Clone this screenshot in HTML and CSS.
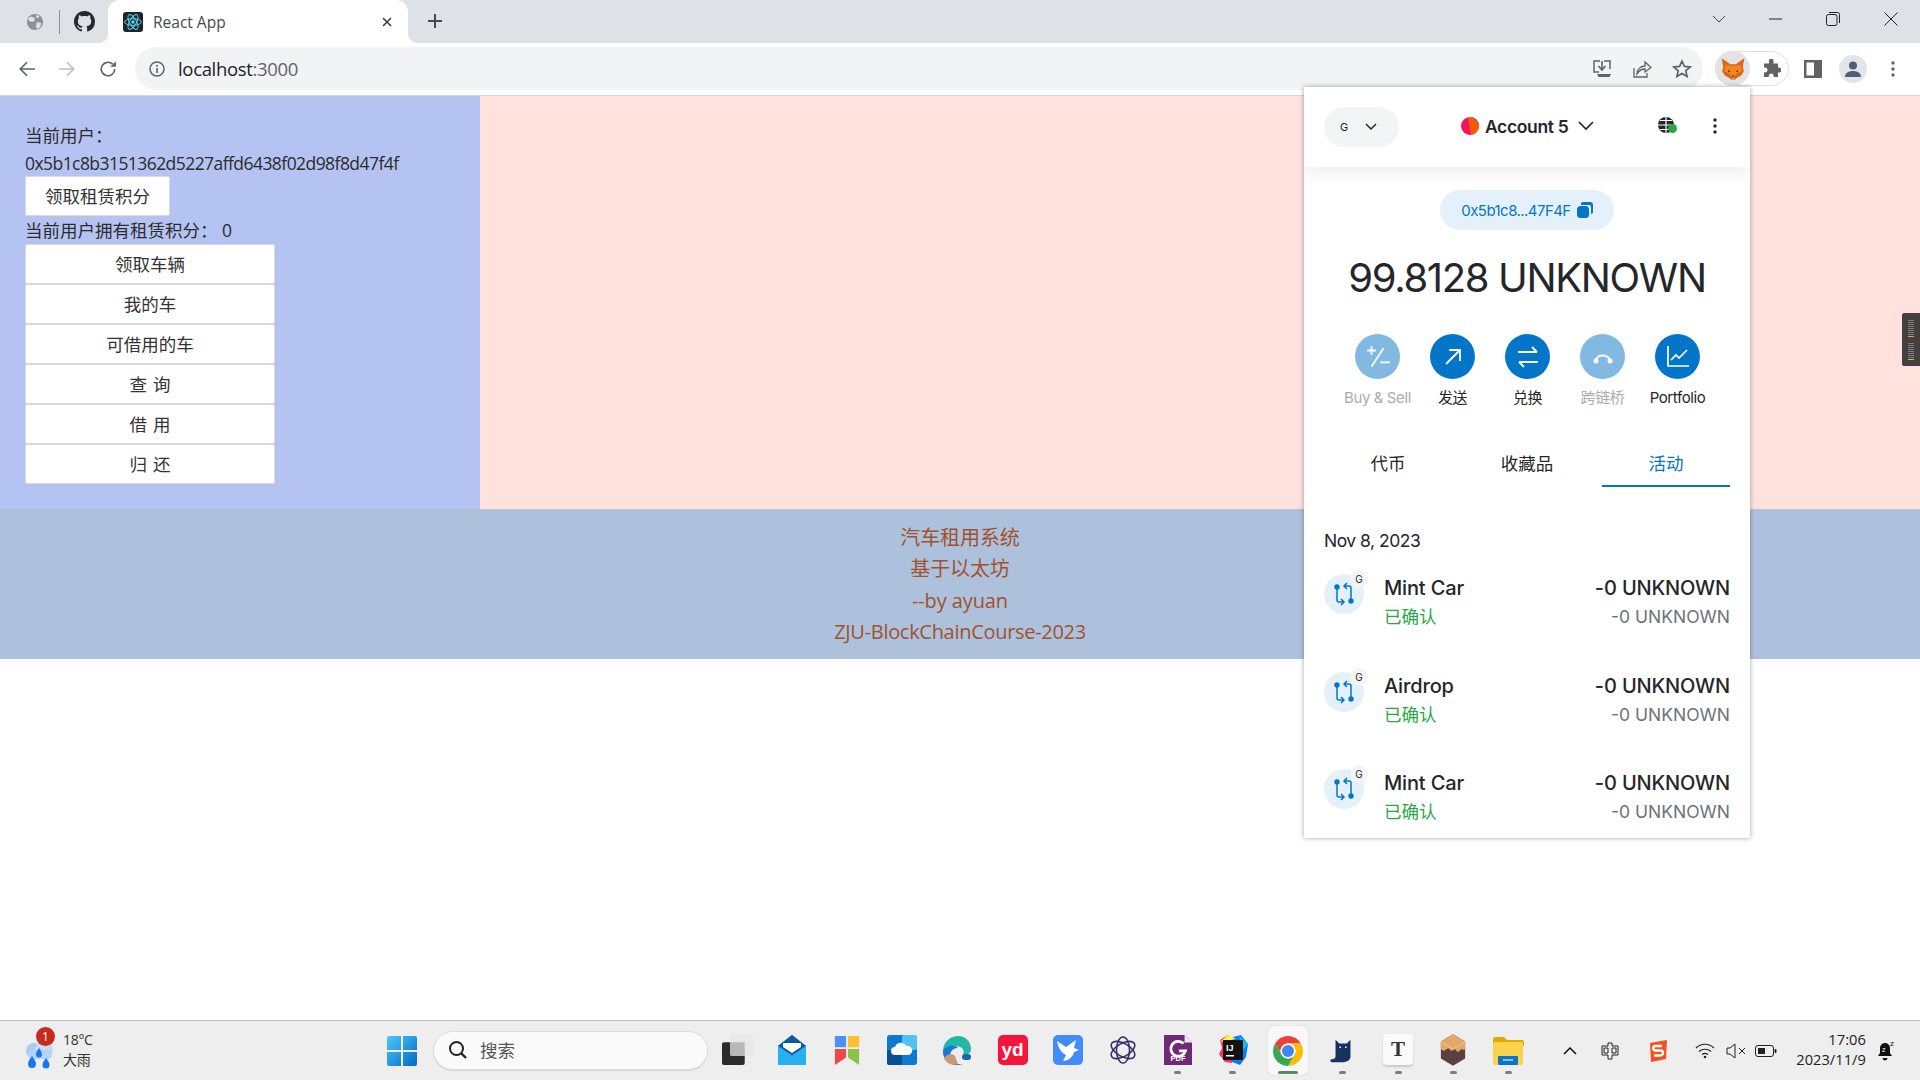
FILE: index.html
```html
<!DOCTYPE html>
<html lang="zh">
<head>
<meta charset="utf-8">
<title>React App</title>
<link rel="stylesheet" href="styles.css">
</head>
<body>
<div class="browser">
  <header class="tabstrip">
    <span class="pin pin-globe"><svg viewBox="0 0 20 20" width="18" height="18"><circle cx="10" cy="10" r="9" fill="#8e9195"/><path d="M5 4l4 1 1 3-3 2-3-1-2-2zM12 10l5 1-1 4-3 3-2-3zM12 2l3 2-2 2-2-2z" fill="#dee1e6"/></svg></span>
    <span class="pin-sep"></span>
    <span class="pin pin-gh"><svg viewBox="0 0 16 16" width="21" height="21"><path fill="#24292f" d="M8 0C3.58 0 0 3.58 0 8c0 3.54 2.29 6.53 5.47 7.59.4.07.55-.17.55-.38 0-.19-.01-.82-.01-1.49-2.01.37-2.53-.49-2.69-.94-.09-.23-.48-.94-.82-1.13-.28-.15-.68-.52-.01-.53.63-.01 1.08.58 1.23.82.72 1.21 1.87.87 2.33.66.07-.52.28-.87.51-1.07-1.78-.2-3.64-.89-3.64-3.95 0-.87.31-1.59.82-2.15-.08-.2-.36-1.02.08-2.12 0 0 .67-.21 2.2.82.64-.18 1.32-.27 2-.27s1.36.09 2 .27c1.53-1.04 2.2-.82 2.2-.82.44 1.1.16 1.92.08 2.12.51.56.82 1.27.82 2.15 0 3.07-1.87 3.75-3.65 3.95.29.25.54.73.54 1.48 0 1.07-.01 1.93-.01 2.2 0 .21.15.46.55.38A8.01 8.01 0 0 0 16 8c0-4.42-3.58-8-8-8z"/></svg></span>
    <div class="tab">
      <span class="tab-fav"><svg viewBox="-12 -12 24 24" width="20" height="20"><g fill="none" stroke="#61dafb" stroke-width="1.1"><ellipse rx="10" ry="4"/><ellipse rx="10" ry="4" transform="rotate(60)"/><ellipse rx="10" ry="4" transform="rotate(120)"/></g><circle r="2" fill="#61dafb"/></svg></span>
      <span class="tab-title">React App</span>
      <svg class="tab-x" viewBox="0 0 12 12" width="12" height="12"><path d="M2 2l8 8M10 2l-8 8" stroke="#3c4043" stroke-width="1.6"/></svg>
    </div>
    <svg class="newtab" viewBox="0 0 16 16" width="16" height="16"><path d="M8 1v14M1 8h14" stroke="#45494e" stroke-width="2"/></svg>
    <div class="winctl">
      <svg viewBox="0 0 14 8" width="14" height="8" class="wc-chev"><path d="M1 1l6 6 6-6" fill="none" stroke="#44474c" stroke-width="1"/></svg>
      <svg viewBox="0 0 14 2" width="14" height="2" class="wc-min"><path d="M0 1h13" stroke="#222" stroke-width="1"/></svg>
      <svg viewBox="0 0 14 14" width="14" height="14" class="wc-max"><rect x=".5" y="2.5" width="10.5" height="11" rx="2" fill="none" stroke="#222"/><path d="M3 .5h8.5a2 2 0 0 1 2 2V11" fill="none" stroke="#222"/></svg>
      <svg viewBox="0 0 14 14" width="14" height="14" class="wc-x"><path d="M.5.5l13 13M13.5.5l-13 13" stroke="#222" stroke-width="1"/></svg>
    </div>
  </header>

  <nav class="toolbar">
    <svg class="nav nav-back" viewBox="0 0 16 16" width="18" height="18"><path d="M15 8H2M8 2L2 8l6 6" fill="none" stroke="#5f6368" stroke-width="1.5"/></svg>
    <svg class="nav nav-fwd" viewBox="0 0 16 16" width="18" height="18"><path d="M1 8h13M8 2l6 6-6 6" fill="none" stroke="#bdc1c6" stroke-width="1.5"/></svg>
    <svg class="nav nav-re" viewBox="0 0 16 16" width="18" height="18"><path d="M14 8a6 6 0 1 1-1.8-4.3" fill="none" stroke="#5f6368" stroke-width="1.5"/><path d="M15 1v5h-5z" fill="#5f6368"/></svg>
    <div class="omnibox">
      <svg class="omni-info" viewBox="0 0 16 16" width="16" height="16"><circle cx="8" cy="8" r="7" fill="none" stroke="#5f6368" stroke-width="1.5"/><path d="M8 7v5" stroke="#5f6368" stroke-width="1.6"/><circle cx="8" cy="4.7" r="1" fill="#5f6368"/></svg>
      <span class="url">localhost<span class="url-dim">:3000</span></span>
      <span class="omni-right">
        <svg viewBox="0 0 20 20" width="20" height="20"><path d="M8 2H2v11h5M12 2h6v8" fill="none" stroke="#5f6368" stroke-width="1.5"/><path d="M10 2v8M6.5 7l3.5 4 3.5-4" fill="none" stroke="#5f6368" stroke-width="1.6"/><path d="M5 15h14l-1.5 3H6.5z" fill="#5f6368"/></svg>
        <svg viewBox="0 0 20 20" width="20" height="20"><path d="M2 9v9h13v-4" fill="none" stroke="#5f6368" stroke-width="1.3"/><path d="M5 15c0-5 4-8 8-8V3l6 5.5L13 13V10c-3 0-6 1.5-8 5z" fill="none" stroke="#5f6368" stroke-width="1.3"/></svg>
        <svg viewBox="0 0 20 20" width="20" height="20"><path d="M10 2l2.400 5.400 5.800.6-4.400 3.900 1.300 5.700-5.100-3-5.100 3 1.300-5.700L1.800 8l5.800-.6z" fill="none" stroke="#5f6368" stroke-width="1.7"/></svg>
      </span>
    </div>
    <div class="ext-pill">
      <span class="ext-fox"><svg viewBox="0 0 24 24" width="26" height="26"><path d="M1.500 2L9.500 7.500h5L22.500 2 21 10l1 4-2.500 4-4.500 2.500-1 1.500h-4L9 20.500 4.500 18 2 14l1-4z" fill="#d9661a"/><path d="M5 8l5 1h4l5-1 1 6-4 2-4 4-4-4-4-2z" fill="#f6851b"/><path d="M10 20.500h4l-.8 1.500h-2.400z" fill="#c0ad9e"/><path d="M7.500 13l2 1-2 1zM16.500 13l-2 1 2 1zM11 18h2l-1 1.500z" fill="#233447"/></svg></span>
      <svg class="ext-puzzle" viewBox="0 0 20 20" width="20" height="20"><path d="M8 1.500a2.300 2.300 0 0 1 4.500 0V4.500h4.500v4.300a2.500 2.500 0 1 1 0 4.600V18H12.500a2.500 2.500 0 1 0-4.600 0H3v-4.800a2.500 2.500 0 1 0 0-4.600V4.500h5z" fill="#5f6368"/></svg>
    </div>
    <svg class="tb-side" viewBox="0 0 18 18" width="18" height="18"><path d="M0 0h18v18H0zM2.500 2.500v13H10v-13z" fill="#5f6368" fill-rule="evenodd"/></svg>
    <span class="tb-prof"><svg viewBox="0 0 20 20" width="20" height="20"><circle cx="10" cy="6.500" r="4" fill="#515f76"/><path d="M2 18c0-4 3.500-6 8-6s8 2 8 6z" fill="#515f76"/></svg></span>
    <svg class="tb-dots" viewBox="0 0 4 16" width="4" height="16"><circle cx="2" cy="2" r="1.7" fill="#5f6368"/><circle cx="2" cy="8" r="1.7" fill="#5f6368"/><circle cx="2" cy="14" r="1.7" fill="#5f6368"/></svg>
  </nav>

  <main class="page">
    <section class="content">
      <aside class="sidebar">
        <div class="line user">当前用户：</div>
        <div class="line addr">0x5b1c8b3151362d5227affd6438f02d98f8d47f4f</div>
        <button class="btn btn-claim">领取租赁积分</button>
        <div class="line credit">当前用户拥有租赁积分：&nbsp;0</div>
        <div class="menu">
          <button class="btn">领取车辆</button>
          <button class="btn">我的车</button>
          <button class="btn">可借用的车</button>
          <button class="btn">查 询</button>
          <button class="btn">借 用</button>
          <button class="btn">归 还</button>
        </div>
      </aside>
      <div class="stage"></div>
    </section>
    <footer class="foot">
      <div>汽车租用系统</div>
      <div>基于以太坊</div>
      <div>--by ayuan</div>
      <div class="foot-course">ZJU-BlockChainCourse-2023</div>
    </footer>
    <div class="blank"></div>
  </main>

  <div class="side-widget">
    <span class="ticks"><i></i><i></i><i></i><i></i><i></i><i></i><i></i><i></i><b class="or"></b></span>
    <span class="ticks"><i></i><i></i><i></i><i></i><i></i><i></i><i></i><i></i><b class="gr"></b></span>
  </div>

  <div class="mm">
    <div class="mm-head">
      <div class="net"><span class="net-g">G</span><svg viewBox="0 0 12 8" width="12" height="8"><path d="M1 1l5 5 5-5" fill="none" stroke="#24272a" stroke-width="1.5"/></svg></div>
      <div class="acct">
        <svg viewBox="0 0 18 18" width="18" height="18"><defs><clipPath id="jz"><circle cx="9" cy="9" r="9"/></clipPath></defs><g clip-path="url(#jz)"><rect width="18" height="18" fill="#f5135b"/><path d="M7 0h11v18H10z" fill="#fb5a00"/><path d="M11 0h7v6z" fill="#1d5fdb"/></g></svg>
        <span class="acct-name">Account 5</span>
        <svg viewBox="0 0 16 10" width="16" height="10"><path d="M1 1l7 7 7-7" fill="none" stroke="#24272a" stroke-width="1.7"/></svg>
      </div>
      <svg class="globe" viewBox="0 0 22 20" width="22" height="20"><circle cx="9" cy="9" r="8" fill="#24272a"/><path d="M9 1v16M1 9h16M3 4.500h12M3 13.500h12" stroke="#fff" stroke-width="1.2"/><circle cx="15.500" cy="12.500" r="4.500" fill="#28a745"/></svg>
      <svg class="kebab" viewBox="0 0 4 16" width="4" height="16"><circle cx="2" cy="2" r="1.7" fill="#24272a"/><circle cx="2" cy="8" r="1.7" fill="#24272a"/><circle cx="2" cy="14" r="1.7" fill="#24272a"/></svg>
    </div>
    <div class="mm-addr"><span>0x5b1c8...47F4F</span><svg viewBox="0 0 16 16" width="16" height="16"><path d="M6 0h7a3 3 0 0 1 3 3v7a2 2 0 0 1-2 2V5a2 2 0 0 0-2-2H4a2.500 2.500 0 0 1 2-3z" fill="#0376c9"/><rect x="0" y="4" width="12" height="12" rx="3.500" fill="#0376c9"/></svg></div>
    <div class="mm-bal">99.8128 UNKNOWN</div>
    <div class="mm-actions">
      <div class="act off"><span class="act-c"><svg viewBox="0 0 24 24" width="26" height="26"><path d="M2 6h8M6 2v8M17 4L6 21M14 17h9" fill="none" stroke="#fff" stroke-width="1.7"/></svg></span><span class="act-l">Buy &amp; Sell</span></div>
      <div class="act"><span class="act-c"><svg viewBox="0 0 24 24" width="24" height="24"><path d="M5 19L18 6M8 5h11v11" fill="none" stroke="#fff" stroke-width="1.8"/></svg></span><span class="act-l">发送</span></div>
      <div class="act"><span class="act-c"><svg viewBox="0 0 24 24" width="24" height="24"><path d="M2 7h19M16 2l5 5M22 17H3M8 22l-5-5" fill="none" stroke="#fff" stroke-width="1.8"/></svg></span><span class="act-l">兑换</span></div>
      <div class="act off"><span class="act-c"><svg viewBox="0 0 24 24" width="24" height="24"><path d="M5 15c2-6 11-6 14 0" fill="none" stroke="#fff" stroke-width="2"/><circle cx="5" cy="16" r="2.500" fill="#fff"/><circle cx="19" cy="16" r="2.500" fill="#fff"/></svg></span><span class="act-l">跨链桥</span></div>
      <div class="act"><span class="act-c"><svg viewBox="0 0 24 24" width="24" height="24"><path d="M2 1v20h21" fill="none" stroke="#fff" stroke-width="1.7"/><path d="M5 15l5-5 3 3 8-8" fill="none" stroke="#fff" stroke-width="1.7"/></svg></span><span class="act-l">Portfolio</span></div>
    </div>
    <div class="mm-tabs">
      <span class="mm-tab">代币</span>
      <span class="mm-tab">收藏品</span>
      <span class="mm-tab on">活动</span>
    </div>
    <div class="mm-date">Nov 8, 2023</div>
    <div class="tx">
      <span class="tx-ic"><svg viewBox="0 0 24 24" width="24" height="24"><g fill="none" stroke="#0376c9" stroke-width="1.500"><path d="M5 6v12a2 2 0 0 0 2 2h4M9 17l3 3-3 3M19 18V6a2 2 0 0 0-2-2h-4M15 7l-3-3 3-3"/></g><circle cx="5" cy="5" r="2.700" fill="#0376c9"/><circle cx="19" cy="19" r="2.700" fill="#0376c9"/></svg><span class="tx-badge">G</span></span>
      <div class="tx-l"><div class="tx-t">Mint Car</div><div class="tx-s">已确认</div></div>
      <div class="tx-r"><div class="tx-t">-0 UNKNOWN</div><div class="tx-v">-0 UNKNOWN</div></div>
    </div>
    <div class="tx">
      <span class="tx-ic"><svg viewBox="0 0 24 24" width="24" height="24"><g fill="none" stroke="#0376c9" stroke-width="1.500"><path d="M5 6v12a2 2 0 0 0 2 2h4M9 17l3 3-3 3M19 18V6a2 2 0 0 0-2-2h-4M15 7l-3-3 3-3"/></g><circle cx="5" cy="5" r="2.700" fill="#0376c9"/><circle cx="19" cy="19" r="2.700" fill="#0376c9"/></svg><span class="tx-badge">G</span></span>
      <div class="tx-l"><div class="tx-t">Airdrop</div><div class="tx-s">已确认</div></div>
      <div class="tx-r"><div class="tx-t">-0 UNKNOWN</div><div class="tx-v">-0 UNKNOWN</div></div>
    </div>
    <div class="tx">
      <span class="tx-ic"><svg viewBox="0 0 24 24" width="24" height="24"><g fill="none" stroke="#0376c9" stroke-width="1.500"><path d="M5 6v12a2 2 0 0 0 2 2h4M9 17l3 3-3 3M19 18V6a2 2 0 0 0-2-2h-4M15 7l-3-3 3-3"/></g><circle cx="5" cy="5" r="2.700" fill="#0376c9"/><circle cx="19" cy="19" r="2.700" fill="#0376c9"/></svg><span class="tx-badge">G</span></span>
      <div class="tx-l"><div class="tx-t">Mint Car</div><div class="tx-s">已确认</div></div>
      <div class="tx-r"><div class="tx-t">-0 UNKNOWN</div><div class="tx-v">-0 UNKNOWN</div></div>
    </div>
  </div>

  <div class="taskbar">
    <div class="weather">
      <span class="wx-ic"><svg viewBox="0 0 34 34" width="34" height="34"><circle cx="12" cy="13" r="8" fill="#a8ccf5"/><circle cx="22" cy="12" r="9" fill="#c4dcf8"/><rect x="6" y="12" width="24" height="9" rx="4.500" fill="#b5d3f7"/><path d="M10 18c3 4 4 6 4 8a4 4 0 0 1-8 0c0-2 1-4 4-8zM24 20c2.500 3.500 3.500 5 3.500 7a3.500 3.500 0 0 1-7 0c0-2 1-3.500 3.500-7zM17 10c2.500 3.500 3 5 3 6.500a3 3 0 0 1-6 0c0-1.500.5-3 3-6.500z" fill="#1677f2"/></svg><span class="wx-badge">1</span></span>
      <span class="wx-t"><span>18°C</span><span>大雨</span></span>
    </div>
    <svg class="winlogo" viewBox="0 0 30 30" width="30" height="30"><defs><linearGradient id="wl" x1="0" y1="0" x2="1" y2="1"><stop offset="0" stop-color="#4cc9f7"/><stop offset="1" stop-color="#0069c8"/></linearGradient></defs><path d="M0 2a2 2 0 0 1 2-2h12v14H0zM16 0h12a2 2 0 0 1 2 2v12H16zM0 16h14v14H2a2 2 0 0 1-2-2zM16 16h14v12a2 2 0 0 1-2 2H16z" fill="url(#wl)"/></svg>
    <div class="search"><svg viewBox="0 0 20 20" width="20" height="20"><circle cx="8.500" cy="8.500" r="6.500" fill="none" stroke="#222" stroke-width="2"/><path d="M13 13l5 5" stroke="#222" stroke-width="2.400"/></svg><span>搜索</span></div>
    <div class="apps">
      <span class="app"><svg viewBox="0 0 30 30" width="31" height="31"><rect x="0" y="8" width="22" height="22" rx="2" fill="#2b2b2b"/><rect x="8" y="0" width="22" height="21" rx="2" fill="#e8e8e8"/><rect x="8" y="8" width="14" height="13" fill="#b8b8b8"/></svg></span>
      <span class="app"><svg viewBox="0 0 32 32" width="32" height="32"><path d="M2 12L16 1l14 11v19H2z" fill="#1d8fe0"/><path d="M2 12L16 1l14 11-14 9z" fill="#0a5aa6"/><path d="M7 9h18v4l-9 6-9-6z" fill="#fff"/><path d="M2 12l14 10 14-10v19H2z" fill="#29b0f0"/></svg></span>
      <span class="app"><svg viewBox="0 0 30 32" width="28" height="32"><rect x="2" y="1" width="12" height="12" fill="#4d90f5"/><rect x="16" y="1" width="12" height="12" fill="#fbc02d"/><path d="M2 15h12v9L2 32z" fill="#e94b43"/><path d="M16 15h12v17l-12-8z" fill="#8bc24a"/></svg></span>
      <span class="app"><svg viewBox="0 0 30 30" width="30" height="30"><rect width="30" height="30" rx="3" fill="#0f78d0"/><rect x="15" width="15" height="15" rx="2" fill="#4fc3f7"/><rect y="15" width="15" height="15" rx="2" fill="#0a4e93"/><path d="M8 20a4 4 0 0 1 0-8 6 6 0 0 1 11-1 4.500 4.500 0 0 1 3 9z" fill="#fff"/></svg></span>
      <span class="app"><svg viewBox="0 0 30 30" width="30" height="30"><path d="M1 15C2 6 9 1 16 1c8 0 13 6 13 13 0 5-5 6-8 5 1-1 1-4-1-6-4-3-11-3-19 2z" fill="#22b8a4"/><path d="M1 15c4-5 12-6 15-2-7 0-9 6-7 11 2 4 6 6 12 5-2 1-4 1-7 1C8 30 0 24 1 15z" fill="#1b78d4"/><path d="M2 23c2-4 9-5 11-2l3 8c-7 2-12-1-14-6z" fill="#c89a78"/><rect x="20" y="19" width="9" height="6" rx="3" fill="#1566b3"/></svg></span>
      <span class="app"><span class="yd">yd</span></span>
      <span class="app"><svg viewBox="0 0 30 30" width="30" height="30"><rect width="30" height="30" rx="5" fill="#418bfb"/><path d="M4 6l9 6 10-7-2 8 5 2-5 2c-1 5-6 9-11 9l3-6c-5-2-8-8-9-14z" fill="#fff"/></svg></span>
      <span class="app"><svg viewBox="0 0 30 30" width="28" height="28"><g fill="none" stroke="#34306a" stroke-width="1.700"><ellipse cx="15" cy="15" rx="7" ry="14"/><ellipse cx="15" cy="15" rx="7" ry="14" transform="rotate(60 15 15)"/><ellipse cx="15" cy="15" rx="7" ry="14" transform="rotate(120 15 15)"/></g></svg></span>
      <span class="app run"><svg viewBox="0 0 30 32" width="28" height="32"><path d="M0 0h22l8 8v24H0z" fill="#6e2a77"/><path d="M22 0l8 8h-8z" fill="#efe6f0"/><text x="15" y="28" font-size="8" font-weight="700" fill="#fff" text-anchor="middle" font-family="Liberation Sans, sans-serif">PDF</text><path d="M21 9a8 8 0 1 0 2 8h-7" fill="none" stroke="#fff" stroke-width="3"/></svg></span>
      <span class="app run"><svg viewBox="0 0 32 32" width="32" height="32"><path d="M3 6l8-5 6 4-2 24-7-1-6-8 3-6z" fill="#fe315d"/><path d="M16 3l8-2 7 9-2 13-6 8-8-3z" fill="#087cfa"/><path d="M22 2l9 8-5 6z" fill="#07c3f2"/><path d="M3 8l8-7 8 4z" fill="#fcf84a"/><rect x="6" y="6" width="20" height="20" fill="#111"/><text x="9" y="17" font-size="9" font-weight="700" fill="#fff" font-family="Liberation Sans, sans-serif">IJ</text><rect x="9" y="21" width="8" height="1.500" fill="#fff"/></svg></span>
      <span class="app active run-g"><svg viewBox="0 0 48 48" width="36" height="36"><path d="M6.680 14A20 20 0 0 1 41.320 14H24A10 10 0 0 0 15.340 29Z" fill="#ea4335"/><path d="M41.320 14A20 20 0 0 1 24 44L32.660 29A10 10 0 0 0 24 14Z" fill="#fbbc05"/><path d="M24 44A20 20 0 0 1 6.680 14L15.340 29A10 10 0 0 0 32.660 29Z" fill="#34a853"/><circle cx="24" cy="24" r="10" fill="#fff"/><circle cx="24" cy="24" r="8" fill="#4285f4"/></svg></span>
      <span class="app run"><svg viewBox="0 0 30 30" width="28" height="28"><path d="M7 4l4 4h8l4-4v18c0 4-4 6-8 6H3c-2 0-2-3 0-3 2 0 4-1 4-3z" fill="#16315f"/><circle cx="12" cy="12" r="1" fill="#d5e4ff"/><circle cx="18" cy="12" r="1" fill="#d5e4ff"/></svg></span>
      <span class="app run"><span class="typora">T</span></span>
      <span class="app run"><svg viewBox="0 0 30 34" width="28" height="32"><path d="M15 0l13 8v18l-13 8-13-8V8z" fill="#5a4040"/><path d="M15 0l13 8v8c-2 2-3-1-5 1s-3 3-5 0-4 3-6 0-4-1-5 0-3 1-5-1V8z" fill="#e2a868"/><path d="M2 8l13 8 13-8" fill="none" stroke="#f2ca98" stroke-width="1"/></svg></span>
      <span class="app run"><svg viewBox="0 0 32 30" width="32" height="30"><path d="M1 4a2 2 0 0 1 2-2h9l3 3h15a2 2 0 0 1 2 2v4H1z" fill="#e2a900"/><rect x="1" y="7" width="30" height="23" rx="2" fill="#fbd34b"/><rect x="6" y="21" width="20" height="9" rx="1" fill="#0b74c9"/><rect x="11" y="24" width="10" height="2" fill="#7cc3f2"/></svg></span>
    </div>
    <svg class="tray t-up" viewBox="0 0 14 8" width="14" height="8"><path d="M1 7l6-6 6 6" fill="none" stroke="#111" stroke-width="1.5"/></svg>
    <svg class="tray t-zh" viewBox="0 0 18 18" width="18" height="18"><path d="M7 1h4v3h6v9h-6v4H7v-4H1V4h6zM7 6H3v5h4zM11 6v5h4V6z" fill="none" stroke="#222" stroke-width="1"/></svg>
    <svg class="tray t-s" viewBox="0 0 20 22" width="20" height="22"><path d="M2 3L19 0l-1 19L3 22z" fill="#f4511e"/><path d="M14 6H7.500a2 2 0 0 0 0 4.500h5a2 2 0 0 1 0 5H6" fill="none" stroke="#fff" stroke-width="2.400"/></svg>
    <svg class="tray t-wifi" viewBox="0 0 20 16" width="20" height="16"><path d="M1 5c5-5 13-5 18 0M4 8.500c3.500-3 8.500-3 12 0M7 11.500c2-1.500 4-1.500 6 0" fill="none" stroke="#222" stroke-width="1.2"/><circle cx="10" cy="14" r="1.300" fill="#222"/></svg>
    <svg class="tray t-snd" viewBox="0 0 20 16" width="20" height="16"><path d="M1 5h3l5-4v14l-5-4H1z" fill="none" stroke="#222" stroke-width="1"/><path d="M13 5l6 6M19 5l-6 6" stroke="#222" stroke-width="1"/></svg>
    <svg class="tray t-bat" viewBox="0 0 22 12" width="22" height="12"><rect x=".5" y=".5" width="18" height="11" rx="2.500" fill="none" stroke="#222"/><rect x="3" y="3" width="7" height="6" fill="#222"/><rect x="19.500" y="4" width="2" height="4" rx="1" fill="#222"/></svg>
    <div class="clock"><span>17:06</span><span>2023/11/9</span></div>
    <svg class="tray t-bell" viewBox="0 0 20 22" width="20" height="22"><path d="M9 3a5 5 0 0 1 5 5v5l2 3H2l2-3V8a5 5 0 0 1 5-5zM6.500 18h5a2.500 2.500 0 0 1-5 0z" fill="#111"/><text x="6" y="12" font-size="7" fill="#fff" font-family="Liberation Sans, sans-serif">z</text><text x="14" y="6" font-size="8" fill="#111" font-family="Liberation Sans, sans-serif">z</text></svg>
  </div>
</div>
</body>
</html>
```
FILE: styles.css
```css
* { box-sizing: border-box; }
html, body { margin: 0; height: 100%; }
body {
  font-family: "Open Sans", "Noto Sans CJK SC", sans-serif;
  background: #fff;
  overflow: hidden;
}
.browser { width: 1920px; height: 1080px; display: flex; flex-direction: column; position: relative; overflow: hidden; }

/* tab strip */
.tabstrip { height: 43px; flex: none; background: #dee1e6; display: flex; align-items: center; }
.pin { width: 24px; display: flex; justify-content: center; }
.pin-globe { margin-left: 23px; }
.pin-sep { width: 1px; height: 24px; background: #8e9195; margin: 0 12px; }
.tab {
  width: 300px; height: 43px; background: #fff; border-radius: 12px 12px 0 0;
  display: flex; align-items: center; padding-left: 15px; padding-right: 15px;
  position: relative; margin-left: 12px;
}
.tab::before, .tab::after { content: ""; position: absolute; bottom: 0; width: 10px; height: 10px; }
.tab::before { left: -10px; background: radial-gradient(circle at 0 0, transparent 10px, #fff 10.5px); }
.tab::after { right: -10px; background: radial-gradient(circle at 100% 0, transparent 10px, #fff 10.5px); }
.tab-fav { width: 20px; height: 20px; background: #20232a; border-radius: 3px; display: flex; }
.tab-title { margin-left: 10px; font-size: 15.5px; color: #45494e; flex: 1; }
.newtab { margin-left: 19px; margin-bottom: 2px; }
.winctl { margin-left: auto; display: flex; align-items: center; height: 100%; padding-bottom: 6px; }
.wc-min { margin-left: 43px; }
.wc-max { margin-left: 43px; }
.wc-x { margin-left: 44px; margin-right: 22px; }

/* toolbar */
.toolbar { height: 53px; flex: none; background: #fff; border-bottom: 1px solid #d6d6d6; display: flex; align-items: center; padding-bottom: 1px; }
.nav-back { margin-left: 18px; }
.nav-fwd { margin-left: 22px; }
.nav-re { margin-left: 23px; }
.omnibox { width: 1568px; height: 43px; margin-left: 18px; border-radius: 22px; background: #f1f3f4; display: flex; align-items: center; padding: 0 11px 0 14px; }
.url { margin-left: 13px; font-size: 18.5px; letter-spacing: -.33px; color: #202124; }
.url-dim { color: #5f6368; }
.omni-right { margin-left: auto; display: flex; gap: 20px; }
.ext-pill { width: 74px; height: 35px; margin-left: 12px; border-radius: 18px; border: 1px solid #e0e0e0; display: flex; align-items: center; }
.ext-fox { width: 35px; height: 35px; margin: -1px 0 -1px -1px; border-radius: 50%; background: #e3e3e3; display: flex; align-items: center; justify-content: center; }
.ext-puzzle { margin-left: 11px; }
.tb-side { margin-left: 15px; }
.tb-prof { width: 28px; height: 28px; border-radius: 50%; background: #e2e5ea; margin-left: 17px; display: flex; align-items: center; justify-content: center; }
.tb-dots { margin-left: 24px; }

/* page */
.page { flex: 1; display: flex; flex-direction: column; min-height: 0; }
.content { height: 413px; flex: none; display: flex; }
.sidebar { width: 480px; background: #b5c3f3; padding: 26px 25px 0; color: #2c2c2c; font-size: 17.5px; }
.stage { flex: 1; background: #ffe1de; }
.line { line-height: 27px; height: 27px; }
.user { height: 28px; }
.addr { letter-spacing: -.56px; height: 26px; }
.btn {
  display: block; background: #fff; border: 1px solid #d9d9d9; border-radius: 2px;
  font: inherit; color: #333; height: 40px; width: 250px; padding: 0; line-height: 36px; word-spacing: 1.5px;
}
.btn-claim { width: 145px; }
.credit { margin-top: 1px; height: 27px; }
.menu { display: flex; flex-direction: column; }
.foot { height: 150px; flex: none; background: #aec1dc; color: #a0522d; text-align: center; font-size: 20px; line-height: 31.4px; padding-top: 13px; letter-spacing: -.1px; }
.foot-course { letter-spacing: -.3px; }
.blank { flex: 1; }

.side-widget { position: absolute; left: 1902px; top: 313px; width: 18px; height: 53px; background: #463f3f; border-radius: 2px 0 0 2px; padding: 7px 0 0 6px; display: flex; flex-direction: column; gap: 6px; }
.ticks { display: flex; flex-direction: column; gap: 1px; }
.ticks i { display: block; width: 6px; height: 1px; background: #7d7d7d; }
.ticks b { display: block; width: 6px; height: 1px; }
.ticks .or { background: #ff9a1f; }
.ticks .gr { background: #8be04a; }

/* metamask popup */
.mm { position: absolute; left: 1304px; top: 87px; width: 446px; height: 751px; background: #fff; box-shadow: 0 0 5px rgba(0,0,0,.35); overflow: hidden; font-family: Inter, "Noto Sans CJK SC", sans-serif; color: #24272a; }
.mm-head { height: 80px; display: flex; align-items: center; padding: 0 0 2px 20px; box-shadow: 0 6px 14px rgba(0,0,0,.07); position: relative; }
.net { width: 75px; height: 40px; margin-top: 2px; border-radius: 20px; background: #f2f4f6; display: flex; align-items: center; padding-left: 16px; gap: 17px; }
.net-g { font-size: 11px; color: #24272a; }
.acct { display: flex; align-items: center; margin-left: 62px; width: 166px; }
.acct-name { font-size: 17.5px; font-weight: 600; margin: 0 10px 0 6px; letter-spacing: -.35px; }
.globe { margin-left: 30px; }
.kebab { margin-left: 34px; }
.mm-addr { width: 174px; height: 40px; margin: 23px auto 0; border-radius: 20px; background: #e5f1fa; color: #0376c9; font-size: 15px; display: flex; align-items: center; justify-content: center; gap: 6px; letter-spacing: -.55px; }
.mm-bal { text-align: center; font-size: 40px; line-height: 56px; margin-top: 20px; letter-spacing: -1.35px; font-weight: 400; }
.mm-actions { display: flex; padding-left: 36px; margin-top: 28px; }
.act { width: 75px; display: flex; flex-direction: column; align-items: center; }
.act-c { width: 45px; height: 45px; border-radius: 50%; background: #0376c9; display: flex; align-items: center; justify-content: center; }
.act.off .act-c { background: #81b9e3; }
.act-l { font-size: 15px; line-height: 20px; margin-top: 9px; margin-bottom: -1px; white-space: nowrap; letter-spacing: -.4px; }
.act.off .act-l { color: #a8adb2; }
.mm-tabs { display: flex; gap: 11px; padding: 0 20px; margin-top: 33px; }
.mm-tab { width: 128px; height: 47px; text-align: center; font-size: 17.5px; line-height: 48px; }
.mm-tab.on { color: #0376c9; border-bottom: 2px solid #0376c9; }
.mm-date { font-size: 17.5px; line-height: 28px; padding-left: 20px; margin-top: 40px; margin-bottom: -1px; letter-spacing: -.5px; }
.tx { height: 97.5px; display: flex; padding: 20px 20px 0; }
.tx-ic { width: 40px; height: 40px; border-radius: 50%; background: #e5f1fa; display: flex; align-items: center; justify-content: center; position: relative; flex: none; }
.tx-badge { position: absolute; right: -4px; top: -4px; width: 18px; height: 18px; border-radius: 50%; background: #f2f4f6; font-size: 10px; display: flex; align-items: center; justify-content: center; }
.tx-l { margin-left: 20px; padding-top: 1px; }
.tx-r { margin-left: auto; text-align: right; padding-top: 1px; }
.tx-t { font-size: 20px; line-height: 26px; font-weight: 500; height: 28px; letter-spacing: -.15px; white-space: nowrap; }
.tx-s { font-size: 17.5px; line-height: 28px; color: #28a745; }
.tx-v { font-size: 17.5px; line-height: 28px; color: #6a737d; letter-spacing: 0; }

/* taskbar */
.taskbar { position: absolute; left: 0; right: 0; bottom: 0; height: 60px; background: #eee; border-top: 1px solid #bdbdbd; display: flex; align-items: center; }
.weather { width: 387px; display: flex; align-items: center; padding-left: 22px; flex: none; }
.wx-ic { position: relative; width: 34px; height: 34px; margin-top: 8px; }
.wx-badge { position: absolute; left: 14px; top: -11px; width: 19px; height: 19px; border-radius: 50%; background: #c42b1c; color: #fff; font-size: 12px; text-align: center; line-height: 19px; }
.wx-t { margin-left: 7px; display: flex; flex-direction: column; font-size: 14px; line-height: 20px; color: #333; letter-spacing: -.3px; margin-top: -2px; }
.winlogo { flex: none; }
.search { width: 275px; height: 39px; border-radius: 20px; margin-left: 16px; background: #fafafa; border: 1px solid #dcdcdc; box-shadow: 0 1px 1px rgba(0,0,0,.1); display: flex; align-items: center; padding: 0 0 2px 14px; gap: 12px; font-size: 17.5px; color: #555; flex: none; }
.apps { display: flex; margin-left: 1.5px; flex: none; }
.app { width: 55.1px; height: 59px; display: flex; align-items: center; justify-content: center; position: relative; padding-bottom: 2px; }
.app.run::after { content: ""; position: absolute; bottom: 6px; left: 24px; width: 7px; height: 3px; border-radius: 2px; background: #7e7e7e; }
.app.active { background: #f8f8f8; border-radius: 5px; box-shadow: 0 0 1px rgba(0,0,0,.3); height: 49px; margin-top: 5px; width: 40px; margin-left: 7.5px; margin-right: 7.5px; padding-bottom: 0; }
.app.run-g::after { content: ""; position: absolute; bottom: 1px; left: 10px; width: 20px; height: 3px; border-radius: 2px; background: #5e8466; }
.yd { width: 30px; height: 30px; border-radius: 5px; background: #f5153a; color: #fff; font: 700 19px/30px "Liberation Sans", sans-serif; text-align: center; }
.typora { width: 30px; height: 31px; border-radius: 4px; background: #fafafa; box-shadow: 0 2px 2px rgba(0,0,0,.15); color: #333; font: 700 21px/30px "Liberation Serif", serif; text-align: center; }
.tray { flex: none; }
.t-up { margin-left: 27px; }
.t-zh { margin-left: 24px; }
.t-s { margin-left: 29px; }
.t-wifi { margin-left: 27px; }
.t-snd { margin-left: 11px; }
.t-bat { margin-left: 9px; }
.clock { width: 89px; display: flex; flex-direction: column; align-items: flex-end; font-size: 14.7px; line-height: 20px; color: #222; padding-bottom: 3px; }
.t-bell { margin-left: 10px; }
```
